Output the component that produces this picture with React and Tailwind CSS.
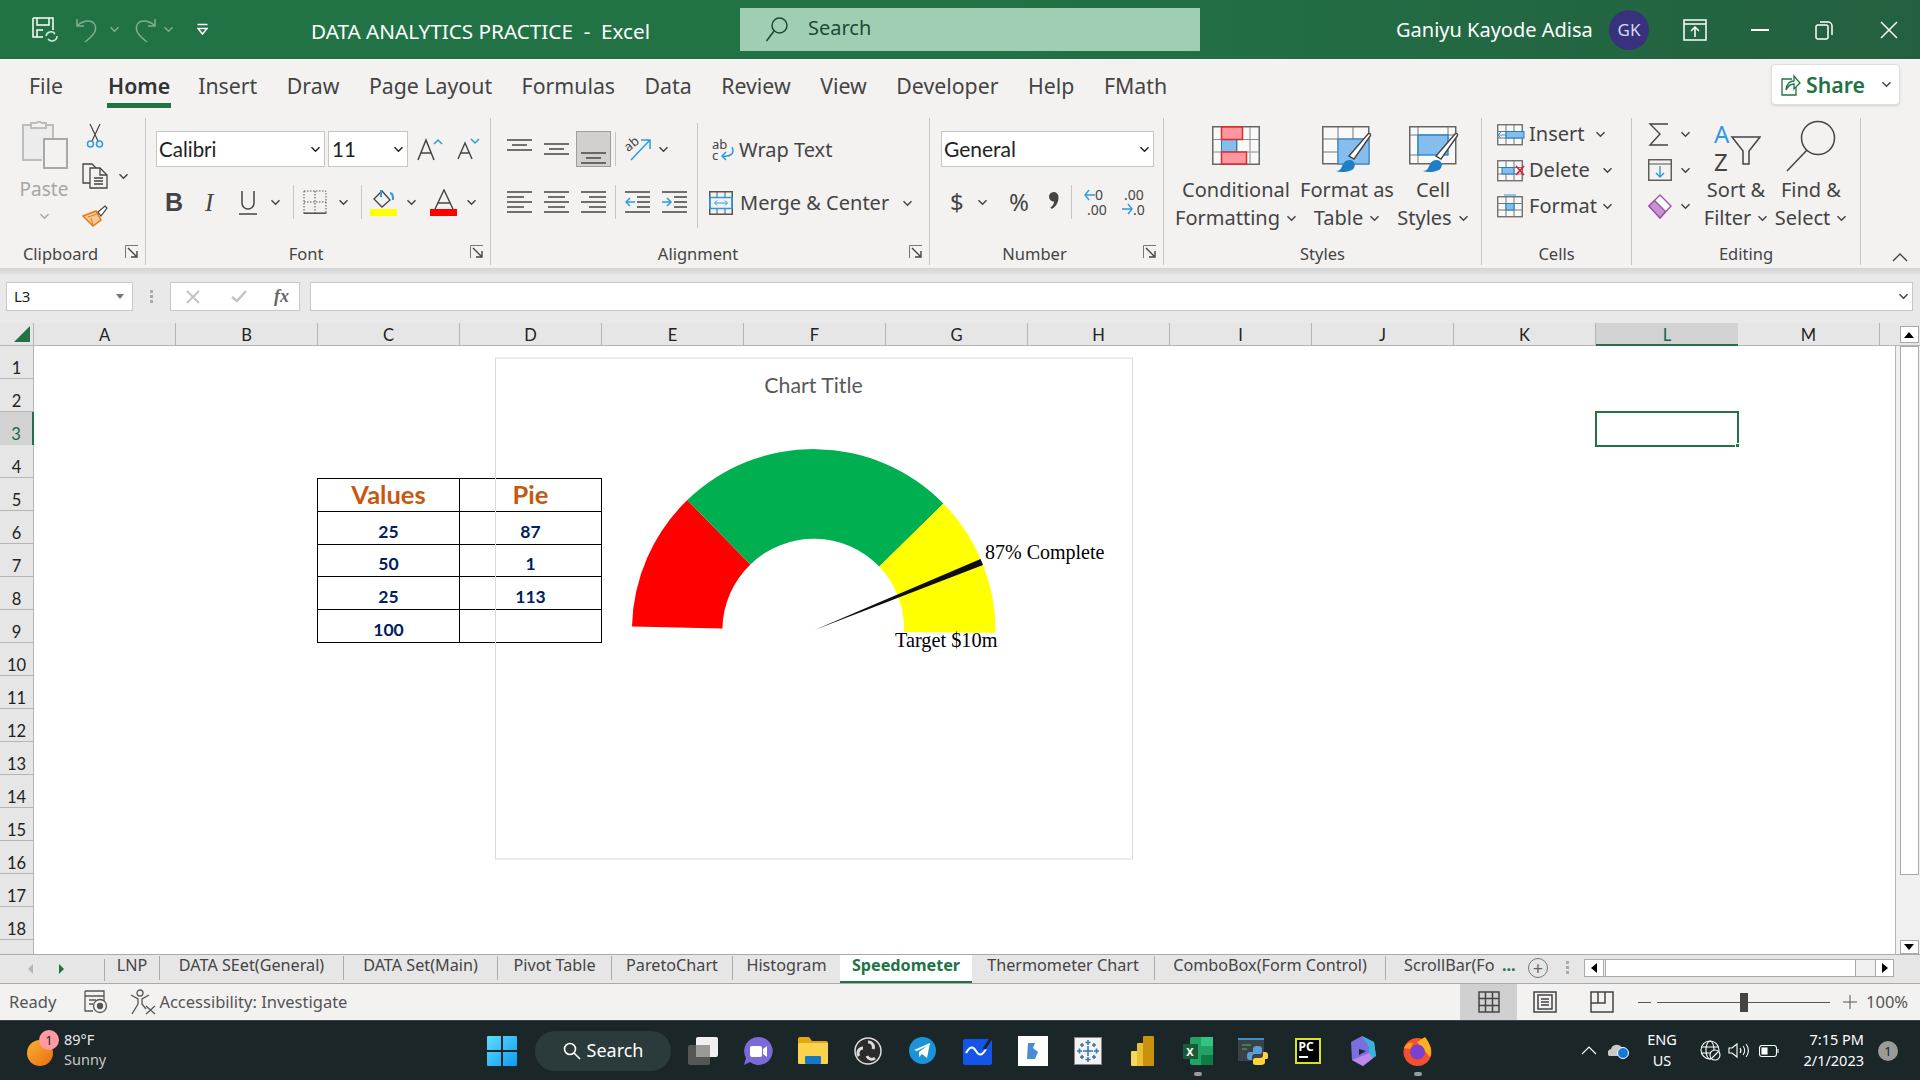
import React from 'react';

const ink = '#444444';
const blue = '#2e9be0';

const Chev = ({ color = ink, className = '' }) => (
  <svg width="11" height="7" viewBox="0 0 11 7" className={`shrink-0 ${className}`}>
    <path d="M1.5 1.2 5.5 5.2 9.5 1.2" fill="none" stroke={color} strokeWidth="1.5" />
  </svg>
);

const Launcher = () => (
  <svg width="14" height="14" viewBox="0 0 14 14" className="absolute right-[6px] top-[1px]">
    <path d="M.5 13V.5H13" fill="none" stroke="#777" />
    <path d="M3 3 11 11M12 6v6H6" fill="none" stroke="#444" strokeWidth="1.4" />
  </svg>
);

const Group = ({ label, width, launcher, children }) => (
  <div className={`relative flex flex-col shrink-0 border-r border-[#c8c6c4] h-[147px] mt-[6px] ${width}`}>
    <div className="flex-1 min-h-0">{children}</div>
    <div className={`relative h-[20px] mb-[1px] text-center text-[16.5px] leading-[20px] text-[#444] ${launcher ? 'pr-[24px]' : ''}`}>
      {label}
      {launcher && <Launcher />}
    </div>
  </div>
);

const Lines = ({ rows, w = 25 }) => (
  <svg width={w} height="22" viewBox={`0 0 ${w} 22`} className="shrink-0">
    {rows.map(([x1, x2, y], i) => (
      <path key={i} d={`M${x1} ${y}H${x2}`} stroke={ink} strokeWidth="1.5" />
    ))}
  </svg>
);

const TableGlyph = ({ children, w = 48, h = 39 }) => (
  <svg width={w} height={h} viewBox="0 0 48 39" className="shrink-0">
    <rect x=".75" y=".75" width="46.5" height="37.5" fill="#f9f9f9" stroke="#666" strokeWidth="1.5" />
    <path d="M9.5 1V38M25 1V38M38 1V38M1 13.5H47M1 26H47" stroke="#8a8a8a" />
    {children}
  </svg>
);

const Brush = () => (
  <g>
    <path d="M27 30 46 8c1.6-1.4 3.4.3 2.2 2L32 33z" fill="#fff" stroke="#444" strokeWidth="1.4" />
    <path d="M14 45c5 0 5-3 7-7 2-4 7-5 10-3 3 3 2 7-1 9-4 2-11 3-16 1z" fill="#1f7fc6" />
  </g>
);

const CellGlyph = ({ children }) => (
  <svg width="28" height="24" viewBox="0 0 28 24" className="shrink-0">
    <rect x=".75" y="2.75" width="24.5" height="20" fill="#f8f8f8" stroke="#666" strokeWidth="1.3" />
    <path d="M9 3V23M17 3V23M1 9.5H25M1 16H25" stroke="#777" />
    {children}
  </svg>
);

const TABS = ['Insert', 'Draw', 'Page Layout', 'Formulas', 'Data', 'Review', 'View', 'Developer', 'Help', 'FMath'];
const COLS = ['A', 'B', 'C', 'D', 'E', 'F', 'G', 'H', 'I', 'J', 'K', 'L', 'M'];
const ROWS = [1, 2, 3, 4, 5, 6, 7, 8, 9, 10, 11, 12, 13, 14, 15, 16, 17, 18];
const TABLE = [['25', '87'], ['50', '1'], ['25', '113'], ['100', '']];
const SHEETS = [
  { name: 'LNP', width: 'w-[55px]' },
  { name: 'DATA SEet(General)', width: 'w-[184px]' },
  { name: 'DATA Set(Main)', width: 'w-[154px]' },
  { name: 'Pivot Table', width: 'w-[114px]' },
  { name: 'ParetoChart', width: 'w-[121px]' },
];

const TitleBar = () => (
  <div className="h-[59px] shrink-0 flex items-center bg-linear-to-r from-[#217346] via-[#217346] to-[#23603f] text-white">
    <svg width="27" height="26" viewBox="0 0 27 26" className="ml-[32px]" fill="none" stroke="#fff" strokeWidth="1.5">
      <path d="M1 1H21V13M1 1V20H11" />
      <path d="M5 1V8H17V1M5 20V13H11" />
      <path d="M14 19a5 5 0 0 1 9-2M25 19a5 5 0 0 1-9 3" stroke="#d8e8de" />
    </svg>
    <svg width="26" height="26" viewBox="0 0 26 26" className="ml-[16px]" fill="none" stroke="#7fae93" strokeWidth="1.5">
      <path d="M2 2V9H9M2 9C8 3 17 2 20 8 23 15 15 21 10 25" />
    </svg>
    <Chev color="#7fae93" className="ml-[8px]" />
    <svg width="26" height="26" viewBox="0 0 26 26" className="ml-[11px]" fill="none" stroke="#7fae93" strokeWidth="1.5">
      <path d="M24 2V9H17M24 9C18 3 9 2 6 8 3 15 11 21 16 25" />
    </svg>
    <Chev color="#7fae93" className="ml-[6px]" />
    <svg width="11" height="13" viewBox="0 0 11 13" className="ml-[23px]">
      <path d="M.5 1.5H10.5" stroke="#fff" strokeWidth="1.5" />
      <path d="M1 5.5 5.5 11 10 5.5z" fill="none" stroke="#fff" strokeWidth="1.5" />
    </svg>
    <div className="ml-[103px] mt-[4px] w-[340px] text-[20.7px] whitespace-pre">DATA ANALYTICS PRACTICE  -  Excel</div>
    <div className="ml-[89px] w-[460px] h-[43px] mb-[1px] bg-[#a0ceb3] flex items-center text-[#1f4a32]">
      <svg width="24" height="26" viewBox="0 0 24 26" className="ml-[25px]" fill="none" stroke="#1f4a32" strokeWidth="1.5">
        <circle cx="14.5" cy="9.5" r="7.5" />
        <path d="M9 15 1.5 25" />
      </svg>
      <span className="ml-[19px] text-[20px] -mt-[2px]">Search</span>
    </div>
    <div className="ml-[196px] w-[196px] text-[20px] whitespace-nowrap">Ganiyu Kayode Adisa</div>
    <div className="ml-[17px] w-[40px] h-[40px] rounded-full bg-[#37317e] flex items-center justify-center text-[17px] text-[#d8d8ee]">GK</div>
    <svg width="24" height="24" viewBox="0 0 24 24" className="ml-[34px]" fill="none" stroke="#fff" strokeWidth="1.5">
      <rect x="1" y="2" width="22" height="20" />
      <path d="M1 6H23M12 19V9M8 13l4-4 4 4" />
    </svg>
    <div className="ml-[44px] w-[18px] h-[2px] bg-white" />
    <svg width="18" height="20" viewBox="0 0 18 20" className="ml-[46px]" fill="none" stroke="#fff" strokeWidth="1.5">
      <rect x="1" y="5" width="12" height="14" rx="2" />
      <path d="M5 2h8a4 4 0 0 1 4 4v9" />
    </svg>
    <svg width="18" height="18" viewBox="0 0 18 18" className="ml-[47px]" stroke="#fff" strokeWidth="1.5">
      <path d="M1 1 17 17M17 1 1 17" />
    </svg>
  </div>
);

const TabRow = () => (
  <div className="h-[53px] shrink-0 flex items-start bg-[#f3f2f1] text-[21.3px] text-[#444]">
    <div className="ml-[29px] mt-[10px] h-[34px] leading-[34px]">File</div>
    <div className="ml-[44px] mt-[10px] h-[39px] leading-[34px] font-semibold text-[#333] border-b-[5px] border-[#217346] px-[1px]">Home</div>
    <div className="flex gap-[29.5px] ml-[27px] mt-[10px] leading-[34px]">
      {TABS.map((t) => <span key={t}>{t}</span>)}
    </div>
    <div className="ml-auto mr-[20px] mt-[5px] w-[129px] h-[41px] bg-white border border-[#e1dfdd] rounded-[4px] flex items-center pl-[9px] text-[#217346] font-semibold shadow-sm">
      <svg width="20" height="22" viewBox="0 0 20 22" fill="none" stroke="#217346" strokeWidth="1.3">
        <path d="M11 5H1V21H15V12" />
        <path d="M5 16c0-6 4-9 8-9V2l6 7-6 6v-5c-3 0-6 2-8 6z" fill="#f3f9f5" />
      </svg>
      <span className="ml-[5px]">Share</span>
      <Chev className="ml-[16px]" />
    </div>
  </div>
);

const Clipboard = () => (
  <div className="flex pl-[20px] h-full">
    <div className="w-[48px] flex flex-col items-center pt-[0px]">
      <svg width="48" height="52" viewBox="0 0 48 52" fill="none" stroke="#bdbdbd" strokeWidth="2">
        <path d="M22 42H3V7H33V20" fill="#ececec" />
        <path d="M11 10V5H16a4 4 0 0 1 6 0H26V10z" fill="#f3f2f1" />
        <rect x="24" y="21" width="23" height="29" fill="#f3f2f1" stroke="#a8a8a8" />
      </svg>
      <div className="text-[19px] leading-[26px] mt-[6px] text-[#a6a6a6]">Paste</div>
      <Chev color="#a6a6a6" className="mt-[11px]" />
    </div>
    <div className="flex flex-col pl-[14px] pt-[5px]">
      <svg width="18" height="26" viewBox="0 0 18 26" className="ml-[4px]" fill="none">
        <path d="M4 1 12 18M14 1 6 18" stroke="#444" strokeWidth="1.2" />
        <circle cx="4.5" cy="21" r="3" stroke={blue} strokeWidth="1.5" />
        <circle cx="13.5" cy="21" r="3" stroke={blue} strokeWidth="1.5" />
      </svg>
      <div className="flex items-center mt-[14px]">
        <svg width="26" height="26" viewBox="0 0 26 26" fill="none" stroke="#444" strokeWidth="1.3">
          <path d="M8 20H1V1H10L14 5" />
          <path d="M8 5H18L25 12V25H8z" fill="#f3f2f1" />
          <path d="M18 5V12H25M12 15H21M12 18H21M12 21H21" />
        </svg>
        <Chev className="ml-[10px]" />
      </div>
      <svg width="26" height="22" viewBox="0 0 26 22" className="mt-[16px]" fill="none">
        <path d="M1 11 14 6 19 15 11 21z" fill="#f9c89a" stroke="#e8790f" strokeWidth="1.5" />
        <path d="M6 12 15 9M11 20 9 13" stroke="#e8790f" />
        <path d="M16 7 23 1 25 3 19 11z" fill="#fff" stroke="#444" strokeWidth="1.2" />
      </svg>
    </div>
  </div>
);

const Font = () => (
  <div className="flex flex-col h-full pl-[10px]">
    <div className="flex items-center mt-[13px] h-[36px]">
      <div className="w-[169px] h-[36px] bg-white border border-[#c8c6c4] flex items-center justify-between pl-[2px] pr-[3px] text-[20.5px] text-[#222] font-['Lato',sans-serif]">Calibri<Chev color="#222" /></div>
      <div className="ml-[3px] w-[80px] h-[36px] bg-white border border-[#c8c6c4] flex items-center justify-between pl-[3px] pr-[3px] text-[20.5px] text-[#222] font-['Lato',sans-serif]">11<Chev color="#222" /></div>
      <svg width="26" height="24" viewBox="0 0 26 24" className="ml-[9px]" fill="none">
        <path d="M1 23 9 3 17 23M4 16H14" stroke="#444" strokeWidth="1.5" />
        <path d="M17 7l4-4 4 4" stroke={blue} strokeWidth="1.5" />
      </svg>
      <svg width="24" height="22" viewBox="0 0 24 22" className="ml-[14px]" fill="none">
        <path d="M1 21 8 5 15 21M3.5 15H12.5" stroke="#444" strokeWidth="1.4" />
        <path d="M14 1l4 4 4-4" stroke={blue} strokeWidth="1.5" />
      </svg>
    </div>
    <div className="flex items-center mt-[17px] h-[36px]">
      <span className="ml-[9px] w-[16px] text-[25px] font-bold text-[#444] leading-none font-['Liberation_Sans',sans-serif]">B</span>
      <span className="ml-[24px] w-[12px] text-[25px] italic text-[#444] leading-none font-['Liberation_Serif',serif]">I</span>
      <svg width="18" height="25" viewBox="0 0 18 25" className="ml-[22px]" fill="none" stroke="#444" strokeWidth="1.5">
        <path d="M3 1V13a6 6 0 0 0 12 0V1M0 24H18" />
      </svg>
      <Chev className="ml-[13px]" />
      <div className="ml-[12px] w-[1px] h-[34px] bg-[#c8c6c4]" />
      <svg width="24" height="24" viewBox="0 0 24 24" className="ml-[9px]" fill="none" stroke="#555">
        <path d="M1 1H23V23M1 1V23M12 1V23M1 12H23" strokeDasharray="1.5 1.5" />
        <path d="M.5 23.2H23.5" strokeWidth="1.6" />
      </svg>
      <Chev className="ml-[11px]" />
      <div className="ml-[12px] w-[1px] h-[34px] bg-[#c8c6c4]" />
      <div className="ml-[8px] w-[27px] flex flex-col items-center">
        <svg width="24" height="20" viewBox="0 0 24 20" fill="none">
          <path d="M2 10 10 2 18 11 10 18z" stroke="#444" strokeWidth="1.3" />
          <path d="M9 1V8M18 4c3 0 3 3 3 7" stroke={blue} strokeWidth="2" />
        </svg>
        <div className="w-[27px] h-[7px] bg-[#ffff00]" />
      </div>
      <Chev className="ml-[9px]" />
      <div className="ml-[13px] w-[27px] flex flex-col items-center">
        <svg width="22" height="20" viewBox="0 0 22 20" fill="none" stroke="#444" strokeWidth="1.4">
          <path d="M2 20 11 1 20 20M5 14H17" />
        </svg>
        <div className="w-[27px] h-[7px] bg-[#ff0000]" />
      </div>
      <Chev className="ml-[9px]" />
    </div>
  </div>
);

const Alignment = () => (
  <div className="flex h-full pl-[16px]">
    <div className="flex flex-col">
      <div className="flex items-center mt-[13px] h-[36px]">
        <Lines rows={[[0, 25, 2], [5, 20, 7], [0, 25, 12]]} />
        <div className="ml-[12px]"><Lines rows={[[0, 25, 6], [5, 20, 11], [0, 25, 16]]} /></div>
        <div className="ml-[7px] w-[35px] h-[36px] bg-[#d2d0ce] border border-[#9f9e9d] flex items-end justify-center pb-[1px]">
          <Lines rows={[[0, 25, 10], [5, 20, 15], [0, 25, 20]]} />
        </div>
        <div className="ml-[4px] w-[1px] h-[34px] bg-[#c8c6c4]" />
        <svg width="26" height="26" viewBox="0 0 26 26" className="ml-[9px] overflow-visible" fill="none">
          <path d="M6 24 24 5M16 4H25V13" stroke={blue} strokeWidth="1.5" />
          <text x="0" y="13" fontSize="13" fill="#444" transform="rotate(-40 6 10)">ab</text>
        </svg>
        <Chev className="ml-[7px]" />
      </div>
      <div className="flex items-center mt-[17px] h-[36px]">
        <Lines rows={[[0, 25, 1], [0, 17, 6], [0, 25, 11], [0, 17, 16], [0, 25, 21]]} />
        <div className="ml-[12px]"><Lines rows={[[0, 25, 1], [4, 21, 6], [0, 25, 11], [4, 21, 16], [0, 25, 21]]} /></div>
        <div className="ml-[12px]"><Lines rows={[[0, 25, 1], [8, 25, 6], [0, 25, 11], [8, 25, 16], [0, 25, 21]]} /></div>
        <div className="ml-[9px] w-[1px] h-[34px] bg-[#c8c6c4]" />
        <svg width="25" height="22" viewBox="0 0 25 22" className="ml-[9px]" fill="none">
          <path d="M0 1H25M12 6H25M12 11H25M12 16H25M0 21H25" stroke={ink} strokeWidth="1.5" />
          <path d="M10 11H1M5 7 1 11 5 15" stroke={blue} strokeWidth="1.5" />
        </svg>
        <svg width="25" height="22" viewBox="0 0 25 22" className="ml-[12px]" fill="none">
          <path d="M0 1H25M12 6H25M12 11H25M12 16H25M0 21H25" stroke={ink} strokeWidth="1.5" />
          <path d="M0 11H9M5 7 9 11 5 15" stroke={blue} strokeWidth="1.5" />
        </svg>
      </div>
    </div>
    <div className="ml-[10px] mt-[5px] w-[1px] h-[105px] bg-[#c8c6c4]" />
    <div className="flex flex-col pl-[11px]">
      <div className="flex items-center mt-[14px] h-[36px] text-[20px] text-[#444] pl-[3px]">
        <svg width="23" height="24" viewBox="0 0 23 24" fill="none" className="overflow-visible">
          <text x="0" y="11" fontSize="13" fill="#444">ab</text>
          <text x="0" y="22" fontSize="13" fill="#444">c</text>
          <path d="M20 9c3 6-1 10-9 9M14 14 10 18 14 22" stroke={blue} strokeWidth="1.5" />
        </svg>
        <span className="ml-[4px]">Wrap Text</span>
      </div>
      <div className="flex items-center mt-[17px] h-[36px] text-[20px] text-[#444]">
        <svg width="24" height="24" viewBox="0 0 24 24" fill="none">
          <rect x=".75" y=".75" width="22.5" height="22.5" stroke="#555" strokeWidth="1.5" />
          <path d="M8 1V6M16 1V6M8 18V23M16 18V23" stroke="#555" />
          <rect x="1" y="6.5" width="22" height="11" stroke={blue} strokeWidth="1.5" />
          <path d="M6 12H18M8 9.5 5.5 12 8 14.5M16 9.5 18.5 12 16 14.5" stroke={blue} />
        </svg>
        <span className="ml-[7px]">Merge &amp; Center</span>
        <Chev className="ml-[13px]" />
      </div>
    </div>
  </div>
);

const NumberGroup = () => (
  <div className="flex flex-col h-full pl-[11px]">
    <div className="mt-[13px] w-[213px] h-[36px] bg-white border border-[#c8c6c4] flex items-center justify-between pl-[2px] pr-[3px] text-[21px] text-[#222] font-['Lato',sans-serif]">General<Chev color="#222" /></div>
    <div className="flex items-center mt-[17px] h-[36px] text-[#444]">
      <span className="ml-[9px] w-[14px] text-[24px] leading-none">$</span>
      <Chev className="ml-[13px]" />
      <span className="ml-[21px] w-[24px] text-[24px] leading-none">%</span>
      <svg width="12" height="22" viewBox="0 0 12 22" className="ml-[15px]">
        <path d="M5.5 1a5 5 0 0 1 5 5c0 6-3 10-7 12l-1-1.5c2-1.5 3.5-3.5 3.5-6a4.5 4.5 0 0 1-.5-9.5z" fill="#444" />
      </svg>
      <div className="ml-[11px] w-[1px] h-[34px] bg-[#c8c6c4]" />
      <svg width="24" height="30" viewBox="0 0 24 30" className="ml-[12px] overflow-visible" fill="none">
        <path d="M11 8H1M5 3 1 8 5 13" stroke={blue} strokeWidth="1.4" />
        <text x="11" y="13" fontSize="14" fill="#444">0</text>
        <text x="3" y="28" fontSize="14" fill="#444">.00</text>
      </svg>
      <svg width="24" height="30" viewBox="0 0 24 30" className="ml-[13px] overflow-visible" fill="none">
        <text x="3" y="13" fontSize="14" fill="#444">.00</text>
        <path d="M1 22H11M7 17 11 22 7 27" stroke={blue} strokeWidth="1.4" />
        <text x="12" y="28" fontSize="14" fill="#444">.0</text>
      </svg>
    </div>
  </div>
);

const BigButton = ({ width, icon, top, bottom }) => (
  <div className={`flex flex-col items-center shrink-0 ${width}`}>
    <div className="h-[54px] pt-[7px]">{icon}</div>
    <div className="text-[20px] leading-[28px] mt-[3px] text-[#444]">{top}</div>
    <div className="flex items-center gap-[6px] text-[20px] leading-[28px] text-[#444]">{bottom}<Chev /></div>
  </div>
);

const Styles = () => (
  <div className="flex pl-[8px] pt-[1px]">
    <BigButton
      width="w-[128px]"
      top="Conditional"
      bottom="Formatting"
      icon={
        <TableGlyph>
          <rect x="9.5" y="13.5" width="15" height="12.5" fill="#85bdec" stroke="#1f7fc6" />
          <rect x="9.5" y="1" width="21" height="12.5" fill="#ff97a0" stroke="#d92c2c" strokeWidth="1.5" />
          <rect x="9.5" y="26" width="25" height="12" fill="#ff97a0" stroke="#d92c2c" strokeWidth="1.5" />
        </TableGlyph>
      }
    />
    <BigButton
      width="w-[94px]"
      top="Format as"
      bottom="Table"
      icon={
        <svg width="54" height="47" viewBox="0 0 54 47" className="ml-[4px]">
          <rect x=".75" y=".75" width="46" height="37" fill="#f9f9f9" stroke="#666" strokeWidth="1.5" />
          <path d="M16 1V38M31 1V38M1 13H47M1 26H47" stroke="#777" />
          <rect x="16" y="13" width="31" height="25" fill="#85bdec" stroke="#1f7fc6" />
          <Brush />
        </svg>
      }
    />
    <BigButton
      width="w-[78px]"
      top="Cell"
      bottom="Styles"
      icon={
        <svg width="54" height="47" viewBox="0 0 54 47" className="ml-[6px]">
          <rect x=".75" y=".75" width="46" height="37" fill="#f9f9f9" stroke="#666" strokeWidth="1.5" />
          <path d="M9 1V38M39 1V13M1 9H47M1 29H9" stroke="#777" />
          <rect x="9" y="9" width="30" height="20" fill="#85bdec" stroke="#1f7fc6" strokeWidth="1.3" />
          <Brush />
        </svg>
      }
    />
  </div>
);

const Cells = () => (
  <div className="flex flex-col pl-[15px] text-[20px] text-[#444] pt-[2px] gap-[8px]">
    <div className="flex items-center h-[28px]">
      <CellGlyph>
        <rect x="9" y="9.5" width="18" height="6.5" fill="#85bdec" stroke="#1f7fc6" />
        <path d="M10 13H1M4 10 1 13 4 16" stroke={blue} fill="none" />
      </CellGlyph>
      <span className="ml-[4px]">Insert</span><Chev className="ml-[11px]" />
    </div>
    <div className="flex items-center h-[28px]">
      <CellGlyph>
        <rect x="5" y="9.5" width="12" height="6.5" fill="#85bdec" stroke="#1f7fc6" />
        <path d="M19 8 27 17M27 8 19 17" stroke="#e81123" strokeWidth="1.5" />
      </CellGlyph>
      <span className="ml-[4px]">Delete</span><Chev className="ml-[12px]" />
    </div>
    <div className="flex items-center h-[28px]">
      <CellGlyph>
        <rect x="9" y="9.5" width="8" height="6.5" fill="#85bdec" stroke="#1f7fc6" />
        <path d="M7 1H19" stroke={blue} />
      </CellGlyph>
      <span className="ml-[4px]">Format</span><Chev className="ml-[5px]" />
    </div>
  </div>
);

const Editing = () => (
  <div className="flex pl-[16px] h-full">
    <div className="flex flex-col pt-[2px]">
      <div className="flex items-center h-[28px]">
        <svg width="22" height="25" viewBox="0 0 22 25" fill="none" stroke="#444" strokeWidth="1.4"><path d="M20 2H2L12 12 2 23H20" /></svg>
        <Chev className="ml-[10px]" />
      </div>
      <div className="flex items-center h-[28px] mt-[8px]">
        <svg width="24" height="22" viewBox="0 0 24 22" fill="none">
          <rect x=".75" y=".75" width="22.5" height="20.5" stroke="#555" strokeWidth="1.4" />
          <path d="M1 5H23" stroke="#555" />
          <path d="M12 7V18M8 14 12 18 16 14" stroke={blue} strokeWidth="1.4" />
        </svg>
        <Chev className="ml-[8px]" />
      </div>
      <div className="flex items-center h-[28px] mt-[8px]">
        <svg width="24" height="25" viewBox="0 0 24 25" fill="none">
          <path d="M12 1 23 12 12 24 1 12z" fill="#fff" stroke="#a24fb0" strokeWidth="1.4" />
          <path d="M6.5 6.5 17.5 17.5 12 24 1 12z" fill="#c792cf" stroke="#a24fb0" strokeWidth="1.4" />
        </svg>
        <Chev className="ml-[8px]" />
      </div>
    </div>
    <div className="flex flex-col items-center w-[84px] ml-[3px]">
      <div className="h-[54px] flex items-end">
        <svg width="50" height="50" viewBox="0 0 50 50" fill="none">
          <text x="3" y="21" fontSize="24" fill={blue} fontFamily="Noto Sans">A</text>
          <text x="3" y="49" fontSize="24" fill="#444" fontFamily="Noto Sans">Z</text>
          <path d="M21 15H49L38 29V42H32V29z" stroke="#444" strokeWidth="1.5" fill="#f3f2f1" />
        </svg>
      </div>
      <div className="text-[20px] leading-[28px] mt-[4px] text-[#444]">Sort &amp;</div>
      <div className="flex items-center gap-[6px] text-[20px] leading-[28px] text-[#444]">Filter<Chev /></div>
    </div>
    <div className="flex flex-col items-center w-[70px] -ml-[2px]">
      <div className="h-[54px] flex items-end">
        <svg width="50" height="52" viewBox="0 0 50 52" fill="none" stroke="#444" strokeWidth="1.5">
          <circle cx="32" cy="18" r="16.5" />
          <path d="M21 30 1 51" />
        </svg>
      </div>
      <div className="text-[20px] leading-[28px] mt-[4px] text-[#444]">Find &amp;</div>
      <div className="flex items-center gap-[6px] text-[20px] leading-[28px] text-[#444]">Select<Chev /></div>
    </div>
  </div>
);

const Ribbon = () => (
  <div className="relative h-[156px] shrink-0 flex items-start bg-[#f3f2f1]">
    <Group label="Clipboard" width="w-[146px]" launcher><Clipboard /></Group>
    <Group label="Font" width="w-[345px]" launcher><Font /></Group>
    <Group label="Alignment" width="w-[439px]" launcher><Alignment /></Group>
    <Group label="Number" width="w-[234px]" launcher><NumberGroup /></Group>
    <Group label="Styles" width="w-[318px]"><Styles /></Group>
    <Group label="Cells" width="w-[150px]"><Cells /></Group>
    <Group label="Editing" width="w-[229px]"><Editing /></Group>
    <svg width="16" height="9" viewBox="0 0 16 9" className="absolute right-[12px] top-[141px]" fill="none" stroke="#444" strokeWidth="1.4">
      <path d="M1 8 8 1 15 8" />
    </svg>
  </div>
);

const FormulaBar = () => (
  <div className="h-[55px] shrink-0 flex items-start bg-linear-to-b from-[#d2d2d2] from-0% to-[#e9e9e9] to-[14%] pt-[14px]">
    <div className="ml-[6px] w-[127px] h-[29px] bg-white border border-[#c8c8c8] flex items-center justify-between pl-[7px] pr-[8px] text-[15px] text-[#222]">
      L3
      <div className="w-0 h-0 border-x-[4px] border-x-transparent border-t-[5px] border-t-[#777]" />
    </div>
    <div className="ml-[17px] w-[3px] h-[13px] mt-[8px] flex flex-col justify-between">
      <div className="h-[3px] bg-[#aaa]" /><div className="h-[3px] bg-[#aaa]" /><div className="h-[3px] bg-[#aaa]" />
    </div>
    <div className="ml-[17px] w-[130px] h-[29px] bg-white border border-[#c8c8c8] flex items-center">
      <svg width="14" height="14" viewBox="0 0 14 14" className="ml-[15px]" stroke="#c4c4c4" strokeWidth="2"><path d="M1 1 13 13M13 1 1 13" /></svg>
      <svg width="16" height="13" viewBox="0 0 16 13" className="ml-[31px]" fill="none" stroke="#c4c4c4" strokeWidth="2.5"><path d="M1 7 6 11 15 1" /></svg>
      <span className="ml-[27px] text-[18px] italic font-bold text-[#666] font-['Liberation_Serif',serif]">fx</span>
    </div>
    <div className="ml-[10px] w-[1603px] h-[29px] bg-white border border-[#c8c8c8] flex items-center justify-end pr-[3px]">
      <Chev />
    </div>
  </div>
);

const ColumnHeaders = () => (
  <div className="h-[23px] shrink-0 flex bg-[#e6e6e6] text-[16.5px] text-[#222] font-['Lato',sans-serif]">
    <div className="w-[34px] border-r border-[#b5b5b5] border-b relative">
      <div className="absolute right-[3px] bottom-[3px] w-0 h-0 border-l-[16px] border-l-transparent border-b-[16px] border-b-[#217346]" />
    </div>
    {COLS.map((c) => (
      <div
        key={c}
        className={c === 'L'
          ? 'w-[142px] text-center leading-[24px] bg-[#d2d2d2] border-b-[2px] border-[#217346] text-[#106b3c]'
          : 'w-[142px] text-center leading-[24px] border-r border-b border-[#b5b5b5]'}
      >
        {c}
      </div>
    ))}
    <div className="flex-1 border-b border-[#b5b5b5]" />
  </div>
);

const RowHeaders = () => (
  <div className="w-[34px] shrink-0 bg-[#e6e6e6] text-[16.5px] text-[#222] font-['Lato',sans-serif]">
    {ROWS.map((r) => (
      <div
        key={r}
        className={r === 3
          ? 'h-[33px] leading-[44px] text-center bg-[#d2d2d2] border-r-[2px] border-[#217346] text-[#106b3c]'
          : 'h-[33px] leading-[44px] text-center border-b border-r border-[#b5b5b5]'}
      >
        {r}
      </div>
    ))}
    <div className="h-[14px] border-r border-[#b5b5b5]" />
  </div>
);

const SalesTable = () => (
  <div className="col-start-3 col-span-2 row-start-5 row-span-5 -ml-[1px] grid grid-cols-2 grid-rows-5 font-['Lato',sans-serif] font-bold border-t-[1.5px] border-l-[1.5px] border-black">
    <div className="border-r-[1.5px] border-b-[1.5px] border-black flex items-center justify-center pb-[2px] text-[25.5px] text-[#c65911]">Values</div>
    <div className="border-r-[1.5px] border-b-[1.5px] border-black flex items-center justify-center pb-[2px] text-[25.5px] text-[#c65911]">Pie</div>
    {TABLE.map((row, i) =>
      row.map((v, j) => (
        <div key={`${i}-${j}`} className="border-r-[1.5px] border-b-[1.5px] border-black flex items-end justify-center text-[17.5px] text-[#002060] leading-[25px]">{v}</div>
      ))
    )}
  </div>
);

const Gauge = () => (
  <svg width="640" height="504" viewBox="495 357 640 504" className="absolute left-[461px] top-[11px] overflow-visible">
    <rect x="495.5" y="358" width="637" height="501" fill="none" stroke="#d9d9d9" />
    <text x="813.5" y="393" textAnchor="middle" fontSize="21.3" fill="#595959" fontFamily="Lato">Chart Title</text>
    <path d="M632 626.5A182 182 0 0 1 687.3 500L750.4 564.5A91 91 0 0 0 722.4 628.6Z" fill="#ff0000" />
    <path d="M687.3 500A182 182 0 0 1 943.4 503.6L879.3 566.6A91 91 0 0 0 750.4 564.5Z" fill="#00b050" />
    <path d="M943.4 503.6A182 182 0 0 1 995.6 632.7L904 632A91 91 0 0 0 879.3 566.6Z" fill="#ffff00" />
    <path d="M814.5 630 980.5 559 983 565Z" fill="#0d0d0d" />
    <text x="985" y="558.5" fontSize="20" fill="#000" fontFamily="Liberation Serif">87% Complete</text>
    <text x="895" y="647" fontSize="20.3" fill="#000" fontFamily="Liberation Serif">Target $10m</text>
  </svg>
);

const VerticalScroll = () => (
  <div className="w-[25px] shrink-0 bg-[#f0f0f0] border-l border-[#b5b5b5] flex flex-col items-center pl-[2px] pt-[0px]">
    <div className="w-[19px] h-[17px] -mt-[20px] bg-white border border-[#aaa] flex items-center justify-center z-10">
      <div className="w-0 h-0 border-x-[5px] border-x-transparent border-b-[6px] border-b-black" />
    </div>
    <div className="w-[19px] h-[529px] mt-[3px] bg-white border border-[#aaa]" />
    <div className="w-[19px] h-[14px] mt-auto bg-white border border-[#aaa] flex items-center justify-center">
      <div className="w-0 h-0 border-x-[5px] border-x-transparent border-t-[6px] border-t-black" />
    </div>
  </div>
);

const Sheet = () => (
  <div className="h-[608px] shrink-0 flex bg-white">
    <RowHeaders />
    <div className="relative flex-1 grid grid-cols-[repeat(13,142px)] grid-rows-[repeat(18,33px)]">
      <SalesTable />
      <div className="relative col-start-12 row-start-3 -m-[1px] -mb-[2px] border-2 border-[#217346]">
        <div className="absolute -right-[3px] -bottom-[3px] w-[5px] h-[5px] bg-[#217346] border border-white" />
      </div>
      <Gauge />
    </div>
    <VerticalScroll />
  </div>
);

const SheetTabs = () => (
  <div className="h-[30px] shrink-0 flex items-start bg-[#e6e6e6] border-t border-[#aaa] border-b text-[16.2px] text-[#444]">
    <div className="w-0 h-0 ml-[28px] mt-[9px] border-y-[5px] border-y-transparent border-r-[5px] border-r-[#b5b5b5]" />
    <div className="w-0 h-0 ml-[26px] mt-[9px] border-y-[5px] border-y-transparent border-l-[5px] border-l-[#217346]" />
    <div className="ml-[40px] w-[1px] h-[22px] mt-[4px] bg-[#aaa]" />
    {SHEETS.map((s) => (
      <div key={s.name} className="h-[26px] mt-[1px] flex items-start">
        <div className={`${s.width} h-[24px] text-center leading-[19px] border-r border-[#aaa] whitespace-nowrap`}>{s.name}</div>
      </div>
    ))}
    <div className="h-[26px] mt-[1px] w-[107px] text-center leading-[19px] whitespace-nowrap">Histogram</div>
    <div className="h-[28px] w-[132px] bg-white border-b-[2px] border-[#217346] text-center leading-[21px] font-bold text-[#217346]">Speedometer</div>
    <div className="h-[24px] mt-[1px] w-[183px] text-center leading-[19px] border-r border-[#aaa] whitespace-nowrap">Thermometer Chart</div>
    <div className="h-[24px] mt-[1px] w-[231px] text-center leading-[19px] border-r border-[#aaa] whitespace-nowrap">ComboBox(Form Control)</div>
    <div className="h-[28px] w-[91px] ml-[18px] leading-[21px] whitespace-nowrap overflow-hidden">ScrollBar(Form Control)</div>
    <span className="leading-[21px] text-[#217346] w-[14px] ml-[7px] font-bold">...</span>
    <div className="ml-[12px] mt-[3px] w-[20px] h-[20px] rounded-full border border-[#777] flex items-center justify-center text-[18px] leading-none text-[#666]">+</div>
    <div className="ml-[18px] mt-[6px] flex flex-col gap-[2px]">
      <div className="w-[3px] h-[3px] bg-[#aaa]" /><div className="w-[3px] h-[3px] bg-[#aaa]" /><div className="w-[3px] h-[3px] bg-[#aaa]" />
    </div>
    <div className="ml-[15px] mt-[4px] w-[310px] h-[18px] flex bg-[#f0f0f0] border border-[#aaa]">
      <div className="w-[19px] bg-white border-r border-[#aaa] flex items-center justify-center">
        <div className="w-0 h-0 border-y-[5px] border-y-transparent border-r-[6px] border-r-black" />
      </div>
      <div className="ml-[1px] w-[251px] bg-white border-x border-[#aaa]" />
      <div className="w-[18px] ml-auto bg-white border-l border-[#aaa] flex items-center justify-center">
        <div className="w-0 h-0 border-y-[5px] border-y-transparent border-l-[6px] border-l-black" />
      </div>
    </div>
  </div>
);

const StatusBar = () => (
  <div className="h-[36px] shrink-0 flex items-center bg-[#f3f2f1] text-[16.5px] text-[#555]">
    <span className="ml-[9px]">Ready</span>
    <svg width="25" height="24" viewBox="0 0 25 24" className="ml-[27px]" fill="none" stroke="#555" strokeWidth="1.3">
      <path d="M2 1H21V11M2 1V21H10M2 6H21M6 10H13M6 14H10" />
      <circle cx="17" cy="16" r="6.5" />
      <circle cx="17" cy="16" r="2.5" fill="#555" />
    </svg>
    <svg width="26" height="26" viewBox="0 0 26 26" className="ml-[22px]" fill="none" stroke="#555" strokeWidth="1.3">
      <circle cx="10" cy="4" r="3" />
      <path d="M1 6 8 10V15L2 25M19 6 12 10V15L16 20" />
      <path d="M16 17 25 25M25 17 16 25" />
    </svg>
    <span className="ml-[3px]">Accessibility: Investigate</span>
    <div className="ml-auto w-[57px] h-[36px] bg-[#d0d0d0] flex items-center justify-center">
      <svg width="22" height="22" viewBox="0 0 22 22" fill="none" stroke="#444" strokeWidth="1.5">
        <path d="M1 1H21V21H1zM1 7.5H21M1 14.5H21M7.5 1V21M14.5 1V21" />
      </svg>
    </div>
    <svg width="24" height="22" viewBox="0 0 24 22" className="ml-[16px]" fill="none" stroke="#444" strokeWidth="1.5">
      <rect x="1" y="1" width="22" height="20" /><rect x="5" y="4" width="14" height="14" /><path d="M8 8H16M8 11H16M8 14H16" />
    </svg>
    <svg width="24" height="22" viewBox="0 0 24 22" className="ml-[33px]" fill="none" stroke="#444" strokeWidth="1.5">
      <path d="M1 1H23V21H1zM1 12H15V1M8 1V12" />
    </svg>
    <div className="ml-[24px] w-[13px] h-[1px] bg-[#555]" />
    <div className="relative ml-[6px] w-[173px] h-[1px] bg-[#555]">
      <div className="absolute left-[83px] top-[-9px] w-[8px] h-[19px] bg-[#444]" />
    </div>
    <svg width="14" height="14" viewBox="0 0 14 14" className="ml-[13px]" stroke="#555"><path d="M7 0V14M0 7H14" /></svg>
    <span className="ml-[9px] w-[44px] mr-[10px] text-[16.5px] whitespace-nowrap">100%</span>
  </div>
);

const TaskIcon = ({ running, children }) => (
  <div className="relative w-[55px] h-[60px] flex items-center justify-center">
    {children}
    {running && <div className="absolute bottom-[5px] w-[8px] h-[4px] rounded-full bg-[#9a9a9a]" />}
  </div>
);

const Taskbar = () => (
  <div className="h-[60px] shrink-0 flex items-center bg-[#1b2628] border-t border-[#3c4446] text-white">
    <div className="relative ml-[27px] w-[26px] h-[30px]">
      <div className="absolute left-0 top-[4px] w-[26px] h-[26px] rounded-full bg-linear-to-br from-[#f9b233] to-[#ea6a0f]" />
      <div className="absolute left-[12px] -top-[6px] w-[20px] h-[20px] rounded-full bg-[#ff9aa2] text-[#222] text-[13px] leading-[20px] text-center">1</div>
    </div>
    <div className="ml-[11px] -mt-[3px] w-[60px] text-[14.5px] leading-[20px] text-[#e8e8e8]">
      <div>89°F</div>
      <div className="text-[#c8c8c8]">Sunny</div>
    </div>
    <div className="ml-[361px] w-[33px] flex justify-center">
      <svg width="30" height="30" viewBox="0 0 30 30">
        <defs>
          <linearGradient id="win" x1="0" y1="0" x2="1" y2="1"><stop offset="0" stopColor="#5fdcff" /><stop offset="1" stopColor="#0f9bf0" /></linearGradient>
        </defs>
        <path d="M0 1a1 1 0 0 1 1-1H14V14H0zM16 0H29a1 1 0 0 1 1 1V14H16zM0 16H14V30H1a1 1 0 0 1-1-1zM16 16H30V29a1 1 0 0 1-1 1H16z" fill="url(#win)" />
      </svg>
    </div>
    <div className="ml-[17px] w-[136px] h-[40px] rounded-full bg-[#2b3a3a] flex items-center justify-center text-[18px]">
      <svg width="18" height="18" viewBox="0 0 18 18" fill="none" stroke="#fff" strokeWidth="1.6"><circle cx="7" cy="7" r="5.5" /><path d="M11 11 17 17" /></svg>
      <span className="ml-[6px]">Search</span>
    </div>
    <div className="ml-[4px] flex">
      <TaskIcon>
        <svg width="30" height="28" viewBox="0 0 30 28">
          <rect x="0" y="8" width="22" height="20" rx="2" fill="#555" />
          <rect x="8" y="0" width="22" height="20" rx="2" fill="#f0f0f0" />
          <rect x="8" y="8" width="14" height="12" fill="#9a9a9a" />
        </svg>
      </TaskIcon>
      <TaskIcon>
        <svg width="30" height="30" viewBox="0 0 30 30">
          <path d="M15 1a14 14 0 1 1-8 25L1 29l2-7A14 14 0 0 1 15 1z" fill="#7b6bd8" />
          <rect x="7" y="10" width="12" height="11" rx="2" fill="#fff" />
          <path d="M20 13 24 10V21L20 18z" fill="#fff" />
        </svg>
      </TaskIcon>
      <TaskIcon>
        <svg width="30" height="27" viewBox="0 0 30 27">
          <path d="M0 2a2 2 0 0 1 2-2H11L14 4H28a2 2 0 0 1 2 2V8H0z" fill="#e3a712" />
          <rect x="0" y="6" width="30" height="21" rx="1" fill="#fbd24e" />
          <rect x="7" y="19" width="16" height="8" rx="1" fill="#1478c8" />
        </svg>
      </TaskIcon>
      <TaskIcon>
        <svg width="28" height="28" viewBox="0 0 28 28">
          <circle cx="14" cy="14" r="13" fill="#2b2b2b" stroke="#dcdcdc" strokeWidth="1.5" />
          <path d="M14 5a5 5 0 0 1 5 7M21 21a5 5 0 0 1-8-2M5 19a5 5 0 0 1 4-8" fill="none" stroke="#dcdcdc" strokeWidth="3" />
        </svg>
      </TaskIcon>
      <TaskIcon>
        <svg width="27" height="27" viewBox="0 0 27 27">
          <circle cx="13.5" cy="13.5" r="13.5" fill="#1c93d6" />
          <path d="M5 13 21 6 18 21 13 17 10 20 10 15 18 9 8 14z" fill="#fff" />
        </svg>
      </TaskIcon>
      <TaskIcon>
        <svg width="30" height="28" viewBox="0 0 30 28">
          <rect x="0" y="2" width="29" height="26" rx="2" fill="#1455e8" />
          <path d="M3 16c4-7 7-7 10-2s6 5 10-2" fill="none" stroke="#fff" strokeWidth="2" />
          <path d="M21 12 29 0" stroke="#222" strokeWidth="3" />
        </svg>
      </TaskIcon>
      <TaskIcon>
        <div className="w-[30px] h-[30px] bg-white flex items-center justify-center">
          <svg width="11" height="16" viewBox="0 0 11 16"><path d="M1 0H8L6 5 11 9 8 16H0z" fill="#4a8bd6" /></svg>
        </div>
      </TaskIcon>
      <TaskIcon>
        <div className="w-[28px] h-[28px] bg-[#f2f2f2] border border-[#888] flex items-center justify-center">
          <svg width="24" height="24" viewBox="0 0 24 24" fill="none" stroke="#3c78a8" strokeWidth="1.6">
            <path d="M12 7V17M7 12H17M12 1V6M9.5 3.5H14.5M12 18V23M9.5 20.5H14.5M1 12H6M3.5 9.5V14.5M18 12H23M20.5 9.5V14.5M6 4V8M4 6H8M18 4V8M16 6H20M6 16V20M4 18H8M18 16V20M16 18H20" />
          </svg>
        </div>
      </TaskIcon>
      <TaskIcon>
        <svg width="23" height="30" viewBox="0 0 23 30">
          <rect x="0" y="15" width="11" height="15" rx="1" fill="#f4d75e" />
          <rect x="6" y="7" width="11" height="23" rx="1" fill="#e9bf35" />
          <rect x="12" y="0" width="11" height="30" rx="1" fill="#c9920e" />
        </svg>
      </TaskIcon>
      <TaskIcon running>
        <div className="relative w-[30px] h-[28px]">
          <div className="absolute left-[7px] top-0 w-[23px] h-[28px] rounded-[2px] bg-[#21a366]" />
          <div className="absolute left-[18px] top-0 w-[12px] h-[9px] bg-[#33c481]" />
          <div className="absolute left-[18px] top-[18px] w-[12px] h-[10px] bg-[#107c41]" />
          <div className="absolute left-0 top-[7px] w-[15px] h-[15px] bg-[#185c37] text-[11px] leading-[15px] font-bold text-center">X</div>
        </div>
      </TaskIcon>
      <TaskIcon>
        <svg width="30" height="30" viewBox="0 0 30 30">
          <rect x="0" y="2" width="26" height="23" rx="1" fill="#3a4248" />
          <rect x="0" y="2" width="26" height="2" fill="#3d8ec9" />
          <path d="M4 9H13M4 13H9" stroke="#5fb04e" strokeWidth="1" />
          <path d="M20 10c-4 0-5 1-5 3v3h-3c-2 0-3 1-3 4s1 4 3 4h2v-3c0-2 1-3 3-3h5c1 0 2-1 2-2v-3c0-2-1-3-4-3z" fill="#5a9fd4" />
          <path d="M22 29c4 0 5-1 5-3v-3h2c1 0 1-2 1-4s-1-3-3-3h-2v3c0 2-1 3-3 3h-5c-1 0-2 1-2 2v3c0 2 2 2 7 2z" fill="#ffd43b" />
        </svg>
      </TaskIcon>
      <TaskIcon>
        <div className="w-[26px] h-[26px] bg-black border-[2px] border-[#d6e21f] text-[12px] leading-[14px] font-bold pl-[2px]">
          PC
          <div className="w-[9px] h-[2px] bg-white mt-[2px]" />
        </div>
      </TaskIcon>
      <TaskIcon>
        <svg width="27" height="30" viewBox="0 0 27 30">
          <path d="M2 6 13 0 25 6 27 20 14 30 3 24z" fill="#7a6ee0" />
          <path d="M13 0 25 6 27 20 20 23V11z" fill="#37b3d8" />
          <path d="M3 24 20 17 24 22 14 30z" fill="#b98ae8" />
          <path d="M10 13 17 15 10 19z" fill="#1b2628" />
        </svg>
      </TaskIcon>
      <TaskIcon running>
        <svg width="29" height="30" viewBox="0 0 29 30">
          <circle cx="14.5" cy="16" r="14" fill="#f5502e" />
          <path d="M22 1c6 7 7 15 5 20L14 6z" fill="#ffb01f" />
          <circle cx="14.5" cy="16" r="7.5" fill="#7b3fd1" />
          <path d="M1 12C3 7 7 6 10 7L7 13z" fill="#ff9a1f" />
        </svg>
      </TaskIcon>
    </div>
    <svg width="16" height="9" viewBox="0 0 16 9" className="ml-[136px]" fill="none" stroke="#fff" strokeWidth="1.2"><path d="M1 8 8 1 15 8" /></svg>
    <svg width="21" height="17" viewBox="0 0 21 17" className="ml-[11px]">
      <path d="M1 14a4 4 0 0 1 2-7 6 6 0 0 1 11-1v8z" fill="#c8c8c8" />
      <circle cx="15" cy="11" r="5.5" fill="#1478d8" stroke="#fff" />
    </svg>
    <div className="ml-[13px] -mt-[1px] w-[40px] text-center text-[14.5px] leading-[21px]">
      <div>ENG</div>
      <div>US</div>
    </div>
    <svg width="21" height="21" viewBox="0 0 21 21" className="ml-[18px]" fill="none" stroke="#fff" strokeWidth="1.1">
      <circle cx="10" cy="10" r="9" /><ellipse cx="10" cy="10" rx="4" ry="9" /><path d="M1 7H19M1 13H19" />
      <circle cx="15" cy="15" r="5" fill="#1b2628" /><path d="M12 18 18 12" />
    </svg>
    <svg width="21" height="17" viewBox="0 0 21 17" className="ml-[7px]" fill="none" stroke="#fff" strokeWidth="1.1">
      <path d="M1 6H4L9 2V15L4 11H1zM12 6a4 4 0 0 1 0 5M15 4a7 7 0 0 1 0 9M18 2a10 10 0 0 1 0 13" />
    </svg>
    <svg width="20" height="12" viewBox="0 0 20 12" className="ml-[10px]" fill="none" stroke="#fff" strokeWidth="1.1">
      <rect x=".5" y=".5" width="17" height="11" rx="2.5" /><rect x="3" y="3" width="5" height="6" fill="#fff" /><path d="M19 4V8" />
    </svg>
    <div className="ml-[11px] -mt-[1px] w-[74px] text-right text-[14.5px] leading-[21px] whitespace-nowrap">
      <div>7:15 PM</div>
      <div>2/1/2023</div>
    </div>
    <div className="ml-[14px] w-[20px] h-[20px] rounded-full bg-[#9a9a98] text-[#222] text-[13px] leading-[20px] text-center">1</div>
  </div>
);

export default function App() {
  return (
    <div className="w-[1920px] h-[1080px] overflow-hidden flex flex-col font-['Noto_Sans',sans-serif] bg-white">
      <TitleBar />
      <TabRow />
      <Ribbon />
      <FormulaBar />
      <ColumnHeaders />
      <Sheet />
      <SheetTabs />
      <StatusBar />
      <Taskbar />
    </div>
  );
}
